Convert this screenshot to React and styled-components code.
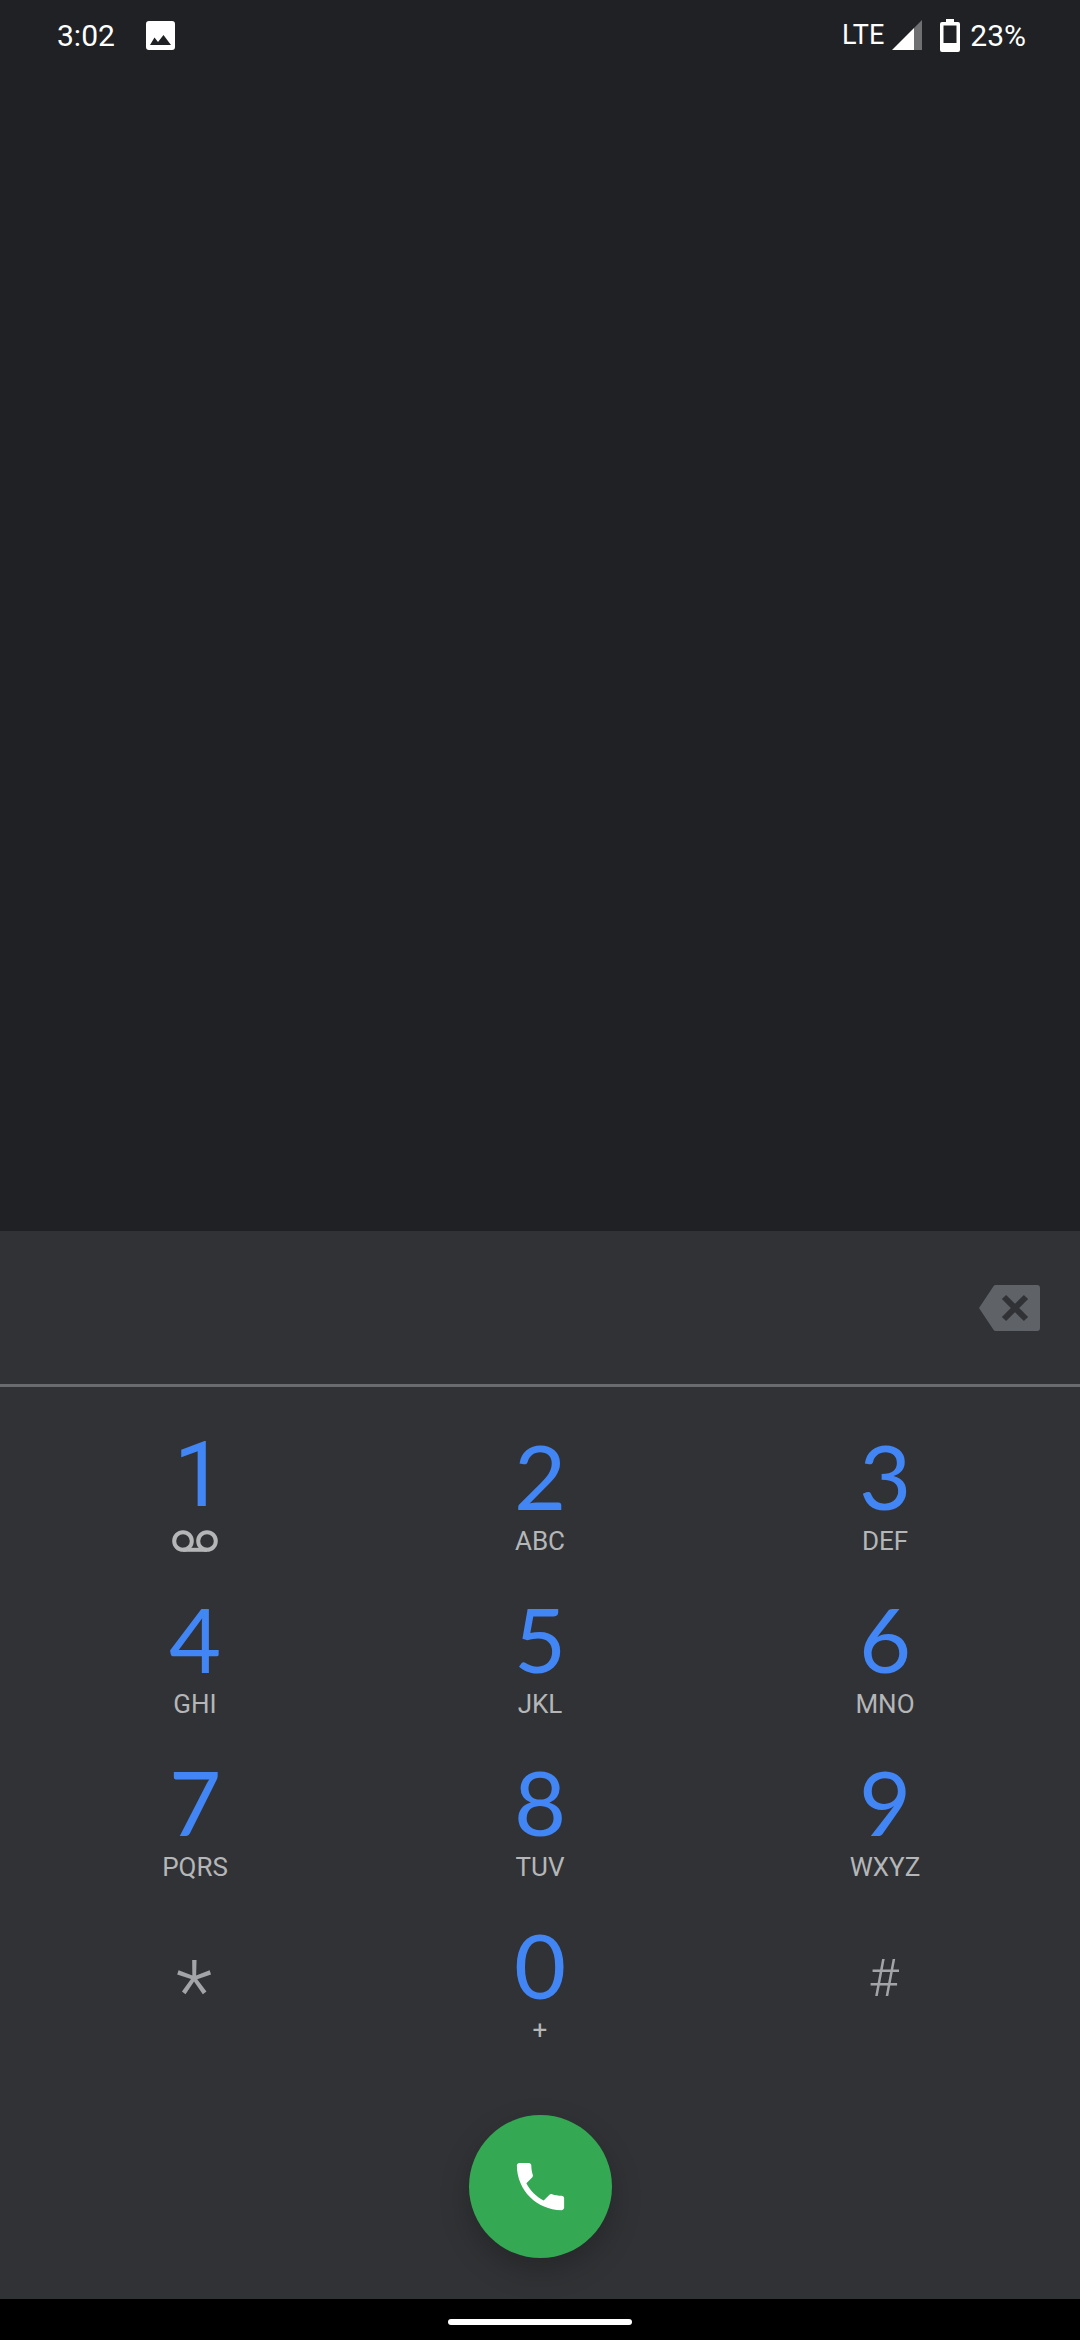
import React from "react";
import styled, { createGlobalStyle } from "styled-components";

const GlobalStyle = createGlobalStyle`
  html, body {
    margin: 0;
    padding: 0;
    background: #000;
  }
  body {
    font-family: Roboto, "Liberation Sans", sans-serif;
  }
`;

const Screen = styled.div`
  width: 1080px;
  height: 2340px;
  display: flex;
  flex-direction: column;
  overflow: hidden;
`;

const Backdrop = styled.div`
  height: 1231px;
  background: #202124;
  flex-shrink: 0;
`;

const StatusBar = styled.div`
  height: 70px;
  padding: 0 54px 0 57px;
  display: flex;
  align-items: center;
  justify-content: space-between;
  color: #fff;
  font-size: 30px;
`;

const StatusGroup = styled.div`
  display: flex;
  align-items: center;
  height: 70px;
`;

const Clock = styled.span`
  width: 89px;
`;

const NetworkLabel = styled.span`
  font-size: 27px;
  margin-right: 8px;
`;

const BatteryLabel = styled.span`
  margin-left: 10px;
`;

const Panel = styled.div`
  flex: 1;
  background: #313235;
  display: flex;
  flex-direction: column;
`;

const DisplayRow = styled.div`
  height: 153px;
  padding-right: 40px;
  border-bottom: 3px solid #6a6b6e;
  display: flex;
  align-items: center;
  justify-content: flex-end;
  flex-shrink: 0;
`;

const Keypad = styled.div`
  display: grid;
  grid-template-columns: repeat(3, 345px);
  grid-auto-rows: 163px;
  justify-content: center;
  padding-top: 38px;
`;

const Key = styled.div`
  display: flex;
  flex-direction: column;
  align-items: center;
`;

const Digit = styled.div`
  font-family: ${(p) => (p.$plain ? "Roboto" : "Lato")}, sans-serif;
  font-size: 90px;
  line-height: 101px;
  height: 101px;
  padding-left: ${(p) => (p.$plain ? 8 : 0)}px;
  color: #4285f4;
`;

const Letters = styled.div`
  font-size: 26px;
  line-height: 30px;
  color: #b5b6b8;
`;

const Symbol = styled.div`
  height: 101px;
  line-height: 101px;
  font-size: ${(p) => p.$size}px;
  padding-top: ${(p) => p.$top}px;
  padding-right: ${(p) => p.$right}px;
  font-weight: 300;
  color: #a2a4a7;
`;

const CallRow = styled.div`
  display: flex;
  justify-content: center;
  padding-top: 38px;
`;

const CallButton = styled.div`
  width: 143px;
  height: 143px;
  border-radius: 50%;
  background: #34a853;
  display: flex;
  align-items: center;
  justify-content: center;
  box-shadow: 0 12px 30px rgba(0, 0, 0, 0.22);
`;

const NavBar = styled.div`
  height: 41px;
  background: #000;
  flex-shrink: 0;
  display: flex;
  justify-content: center;
  padding-top: 20px;
  box-sizing: border-box;
`;

const HomePill = styled.div`
  width: 184px;
  height: 6px;
  border-radius: 3px;
  background: #fff;
`;

const ImageIcon = () => (
  <svg width="29" height="29" viewBox="0 0 29 29">
    <path
      fill="#fff"
      fillRule="evenodd"
      d="M3 0h23a3 3 0 0 1 3 3v23a3 3 0 0 1-3 3H3a3 3 0 0 1-3-3V3a3 3 0 0 1 3-3zM4 24h21l-7.500-10-5.500 7-3.500-4.500z"
    />
  </svg>
);

const SignalIcon = () => (
  <svg width="30" height="30" viewBox="0 0 30 30">
    <path fill="#6f7072" d="M30 0v30h-8V8z" />
    <path fill="#fff" d="M22 8v22H0z" />
  </svg>
);

const BatteryIcon = () => (
  <svg width="20" height="33" viewBox="0 0 20 33" style={{ marginLeft: 18 }}>
    <path
      fill="#fff"
      fillRule="evenodd"
      d="M6 0h8v3h4a2 2 0 0 1 2 2v26a2 2 0 0 1-2 2H2a2 2 0 0 1-2-2V5a2 2 0 0 1 2-2h4zM3.500 6.500v17.500h13V6.500z"
    />
  </svg>
);

const BackspaceIcon = () => (
  <svg width="61" height="46" viewBox="0 0 61 46">
    <path
      fill="#5f6368"
      d="M17 0h41a3 3 0 0 1 3 3v40a3 3 0 0 1-3 3H17a3 3 0 0 1-2.500-1.300L0 23 14.500 1.300A3 3 0 0 1 17 0z"
    />
    <path stroke="#313235" strokeWidth="6" d="M25 12l22 22M47 12L25 34" />
  </svg>
);

const VoicemailIcon = () => (
  <svg width="46" height="22" viewBox="0 0 46 22" style={{ marginTop: 4 }}>
    <circle cx="11" cy="11" r="8.800" fill="none" stroke="#b5b6b8" strokeWidth="4" />
    <circle cx="35" cy="11" r="8.800" fill="none" stroke="#b5b6b8" strokeWidth="4" />
    <path stroke="#b5b6b8" strokeWidth="4" d="M11 19.800h24" />
  </svg>
);

const PhoneIcon = () => (
  <svg width="63" height="63" viewBox="0 0 24 24">
    <path
      fill="#fff"
      d="M6.620 10.790c1.440 2.830 3.760 5.140 6.590 6.590l2.200-2.200c.27-.27.67-.36 1.020-.24 1.120.37 2.330.57 3.570.57.55 0 1 .45 1 1V20c0 .55-.45 1-1 1-9.390 0-17-7.610-17-17 0-.55.45-1 1-1h3.500c.55 0 1 .45 1 1 0 1.250.2 2.450.57 3.570.11.35.03.74-.25 1.020l-2.200 2.200z"
    />
  </svg>
);

const keys = [
  { digit: "1", icon: true, plain: true },
  { digit: "2", letters: "ABC" },
  { digit: "3", letters: "DEF" },
  { digit: "4", letters: "GHI" },
  { digit: "5", letters: "JKL" },
  { digit: "6", letters: "MNO" },
  { digit: "7", letters: "PQRS" },
  { digit: "8", letters: "TUV" },
  { digit: "9", letters: "WXYZ" },
  { symbol: "*", size: 85, top: 28, right: 2 },
  { digit: "0", letters: "+" },
  { symbol: "#", size: 52, top: 14, right: 3 },
];

function App() {
  return (
    <Screen>
      <GlobalStyle />
      <Backdrop>
        <StatusBar>
          <StatusGroup>
            <Clock>3:02</Clock>
            <ImageIcon />
          </StatusGroup>
          <StatusGroup>
            <NetworkLabel>LTE</NetworkLabel>
            <SignalIcon />
            <BatteryIcon />
            <BatteryLabel>23%</BatteryLabel>
          </StatusGroup>
        </StatusBar>
      </Backdrop>
      <Panel>
        <DisplayRow>
          <BackspaceIcon />
        </DisplayRow>
        <Keypad>
          {keys.map((key) => (
            <Key key={key.digit || key.symbol}>
              {key.symbol ? (
                <Symbol $size={key.size} $top={key.top} $right={key.right}>
                  {key.symbol}
                </Symbol>
              ) : (
                <Digit $plain={key.plain}>{key.digit}</Digit>
              )}
              {key.letters && <Letters>{key.letters}</Letters>}
              {key.icon && <VoicemailIcon />}
            </Key>
          ))}
        </Keypad>
        <CallRow>
          <CallButton>
            <PhoneIcon />
          </CallButton>
        </CallRow>
      </Panel>
      <NavBar>
        <HomePill />
      </NavBar>
    </Screen>
  );
}

export default App;
